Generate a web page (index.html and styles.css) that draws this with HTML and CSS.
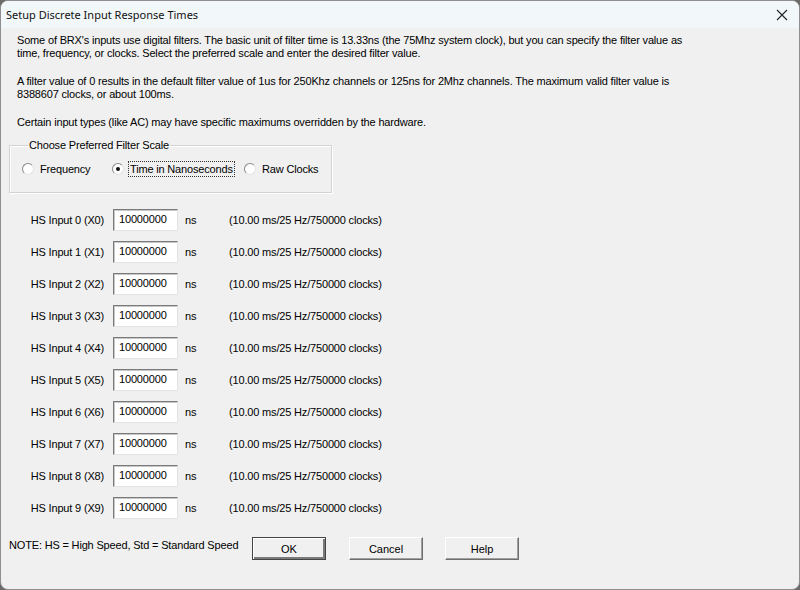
FILE: index.html
```html
<!DOCTYPE html>
<html lang="en">
<head>
    <meta charset="UTF-8">
    <title>Setup Discrete Input Response Times</title>
    <link rel="stylesheet" href="styles.css">
</head>
<body>
<div class="window">
    <div class="titlebar">
        <span class="title">Setup Discrete Input Response Times</span>
        <svg class="close" width="12" height="12" viewBox="0 0 12 12">
            <path d="M1 1 L11 11 M11 1 L1 11" stroke="#222" stroke-width="1.1" fill="none"/>
        </svg>
    </div>

    <div class="content">
        <p class="intro">Some of BRX's inputs use digital filters. The basic unit of filter time is 13.33ns (the 75Mhz system clock), but you can specify the filter value as<br>time, frequency, or clocks. Select the preferred scale and enter the desired filter value.</p>
        <p class="intro">A filter value of 0 results in the default filter value of 1us for 250Khz channels or 125ns for 2Mhz channels. The maximum valid filter value is<br>8388607 clocks, or about 100ms.</p>
        <p class="intro">Certain input types (like AC) may have specific maximums overridden by the hardware.</p>

        <fieldset class="group">
            <legend>Choose Preferred Filter Scale</legend>
            <label class="radio"><span class="dot"></span>Frequency</label>
            <label class="radio checked"><span class="dot"></span><span class="focus">Time in Nanoseconds</span></label>
            <label class="radio"><span class="dot"></span>Raw Clocks</label>
        </fieldset>

        <div class="inputs" id="inputs"></div>

        <div class="footer">
            <span class="note">NOTE: HS = High Speed, Std = Standard Speed</span>
            <button class="btn default">OK</button>
            <button class="btn">Cancel</button>
            <button class="btn">Help</button>
        </div>
    </div>
</div>

<script>
    // ten high speed inputs, all with the same value
    const rows = document.getElementById('inputs');
    for (let i = 0; i < 10; i++) {
        const row = document.createElement('div');
        row.className = 'row';
        row.innerHTML = `
            <span class="lbl">HS Input ${i} (X${i})</span>
            <span class="field">10000000</span>
            <span class="unit">ns</span>
            <span class="info">(10.00 ms/25 Hz/750000 clocks)</span>
        `;
        rows.appendChild(row);
    }
</script>
</body>
</html>
```

FILE: styles.css
```css
* {
    box-sizing: border-box;
}
html, body {
    margin: 0;
    padding: 0;
}
body {
    width: 800px;
    height: 590px;
    background: #6b6b6b;
    font-family: "Liberation Sans", Arial, sans-serif;
    font-size: 11px;
    letter-spacing: -0.17px;
    color: #000;
}
.window {
    width: 800px;
    height: 590px;
    background: #f0f0f0;
    border: 1px solid #8e8e8e;
    border-radius: 8px;
    overflow: hidden;
    display: flex;
    flex-direction: column;
}
.titlebar {
    height: 27px;
    background: #f2f7fa;
    display: flex;
    align-items: center;
    justify-content: space-between;
    padding: 0 11px 0 5px;
}
.title {
    font-family: "Noto Sans", "Open Sans", sans-serif;
    font-size: 11px;
    letter-spacing: 0;
    color: #111;
}
.content {
    flex: 1;
    padding: 6px 8px 0 8px;
}
.intro {
    margin: 0 0 0 8px;
    line-height: 13px;
}
.intro + .intro {
    margin-top: 15px;
}

/* group box */
.group {
    width: 323px;
    height: 54px;
    margin: 10px 0 0 0;
    padding: 10px 0 0 12px;
    border: 1px solid #d3d3d3;
    box-shadow: inset 1px 1px 0 #fff, 1px 1px 0 #fff;
    display: flex;
    align-items: flex-start;
}
.group legend {
    padding: 0 1px;
    margin-left: 6px;
    line-height: 12px;
}
.radio {
    display: flex;
    align-items: center;
    height: 16px;
}
.radio:nth-of-type(1) { width: 90px; }
.radio:nth-of-type(2) { width: 132px; }
.dot {
    width: 12px;
    height: 12px;
    border-radius: 50%;
    margin-right: 6px;
    background: #fff;
    border: 1px solid;
    border-color: #8a8a8a #e2e2e2 #e2e2e2 #8a8a8a;
    position: relative;
}
.checked .dot {
    margin-right: 4px;
}
.checked .dot::after {
    content: "";
    position: absolute;
    left: 3px;
    top: 3px;
    width: 4px;
    height: 4px;
    border-radius: 50%;
    background: #111;
}
.focus {
    border: 1px dotted #333;
    padding: 0 1px;
    line-height: 14px;
}

/* input rows */
.inputs {
    margin-top: 11px;
}
.row {
    height: 32px;
    display: flex;
    align-items: center;
}
.lbl {
    width: 104px;
    text-align: right;
    padding-right: 9px;
}
.field {
    width: 65px;
    height: 22px;
    background: #fff;
    border: 1px solid;
    border-color: #7a7a7a #e3e3e3 #e3e3e3 #7a7a7a;
    box-shadow: inset 1px 1px 0 #c8c8c8;
    padding: 3px 0 0 5px;
}
.unit {
    width: 51px;
    padding-left: 7px;
}

/* bottom bar */
.footer {
    margin-top: 14px;
    display: flex;
    align-items: flex-start;
}
.note {
    width: 243px;
    padding-top: 1px;
}
.btn {
    width: 74px;
    height: 23px;
    margin-top: -1px;
    margin-right: 22px;
    font: inherit;
    background: #f0f0f0;
    border: 1px solid;
    border-color: #fff #6d6d6d #6d6d6d #fff;
    box-shadow: inset -1px -1px 0 #a0a0a0;
    padding: 0;
}
.btn.default {
    margin-right: 23px;
    border: 1px solid #444;
    box-shadow: inset 1px 1px 0 #fff, inset -2px -2px 0 #7a7a7a;
}
```
